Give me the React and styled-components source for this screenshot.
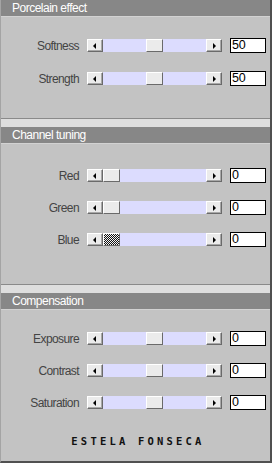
import React from "react";
import styled, { createGlobalStyle } from "styled-components";

const GlobalStyle = createGlobalStyle`
    html, body {
        margin: 0;
        padding: 0;
        background: #dedede;
    }
    * {
        box-sizing: border-box;
    }
`;

const uiFont = `"Liberation Sans", Arial, sans-serif`;

const StyledWindow = styled.div`
    width: 272px;
    height: 463px;
    display: flex;
    flex-direction: column;
    background: #dedede;
    border-left: 1px solid #a4a4a4;
    border-right: 2px solid #505050;
    border-bottom: 2px solid #505050;
    overflow: hidden;
    font-family: ${uiFont};
`;

const StyledPanel = styled.section`
    display: flex;
    flex-direction: column;
    background: #c3c3c3;
    border-bottom: ${({ $last }) => ($last ? "none" : "1px solid #8a8a8a")};
    margin-bottom: ${({ $last }) => ($last ? "0" : "8px")};
    flex: ${({ $last }) => ($last ? "1" : "none")};
`;

const StyledHeader = styled.h2`
    margin: 0;
    height: 17px;
    padding: 0 0 0 11px;
    background: #878787;
    border-bottom: 1px solid #d2d2d2;
    color: #fff;
    font-family: ${uiFont};
    font-size: 12px;
    letter-spacing: -0.5px;
    font-weight: normal;
    line-height: 16px;
`;

const StyledBody = styled.div`
    display: flex;
    flex-direction: column;
    gap: ${({ $gap }) => $gap}px;
    padding: ${({ $top }) => $top}px 0 ${({ $bottom }) => $bottom}px;
    flex: 1;
`;

const StyledRow = styled.div`
    display: flex;
    align-items: center;
    height: 15px;
`;

const StyledLabel = styled.span`
    width: 79px;
    padding-right: 1px;
    text-align: right;
    color: #444;
    font-size: 12px;
    letter-spacing: -0.6px;
    margin-right: 7px;
`;

const StyledSlider = styled.div`
    display: flex;
    width: 135px;
    height: 13px;
`;

const StyledArrowButton = styled.div`
    width: 16px;
    height: 13px;
    flex: none;
    display: flex;
    align-items: center;
    justify-content: center;
    background: #ebebeb;
    border-top: 1px solid #fff;
    border-left: 1px solid #fff;
    border-right: 1px solid #6a6a6a;
    border-bottom: 1px solid #6a6a6a;
    box-shadow: inset -1px -1px 0 #a8a8a8;
`;

const StyledArrow = styled.span`
    width: 0;
    height: 0;
    border-top: 3px solid transparent;
    border-bottom: 3px solid transparent;
    ${({ $dir }) =>
        $dir === "left"
            ? "border-right: 3px solid #000; margin-right: 1px;"
            : "border-left: 3px solid #000; margin-left: 1px;"}
`;

const StyledTrack = styled.div`
    position: relative;
    flex: 1;
    background: #dcdcfe;
`;

const StyledThumb = styled.div`
    position: absolute;
    top: 0;
    width: 17px;
    height: 13px;
    background: ${({ $dither }) =>
        $dither
            ? "repeating-conic-gradient(#111 0 25%, #f4f4f4 0 50%) 0 0 / 2px 2px"
            : "#ebebeb"};
    border-top: 1px solid #fff;
    border-left: 1px solid #fff;
    border-right: 1px solid #6a6a6a;
    border-bottom: 1px solid #6a6a6a;
`;

const StyledInput = styled.div`
    width: 36px;
    height: 15px;
    margin-left: 8px;
    padding-left: 1px;
    background: #fff;
    border: 1px solid #000;
    color: #000;
    font-size: 12.5px;
    letter-spacing: -0.3px;
    line-height: 13px;
`;

const StyledSignature = styled.div`
    margin-top: auto;
    margin-bottom: 14px;
    padding-left: 5px;
    text-align: center;
    font-family: "DejaVu Sans Mono", monospace;
    font-weight: bold;
    font-size: 10.5px;
    letter-spacing: 3.2px;
    color: #111;
`;

const panels = [
    {
        title: "Porcelain effect",
        top: 21,
        gap: 18,
        bottom: 32,
        rows: [
            { label: "Softness", value: 50, min: 0, max: 100 },
            { label: "Strength", value: 50, min: 0, max: 100 },
        ],
    },
    {
        title: "Channel tuning",
        top: 24,
        gap: 17,
        bottom: 37,
        rows: [
            { label: "Red", value: 0, min: 0, max: 100 },
            { label: "Green", value: 0, min: 0, max: 100 },
            { label: "Blue", value: 0, min: 0, max: 100, dither: true },
        ],
    },
    {
        title: "Compensation",
        top: 21,
        gap: 17,
        bottom: 0,
        rows: [
            { label: "Exposure", value: 0, min: -100, max: 100 },
            { label: "Contrast", value: 0, min: -100, max: 100 },
            { label: "Saturation", value: 0, min: -100, max: 100 },
        ],
    },
];

const TRACK_RANGE = 135 - 32 - 17;

const SliderRow = ({ label, value, min, max, dither }) => {
    const left = Math.round(((value - min) / (max - min)) * TRACK_RANGE);
    return (
        <StyledRow>
            <StyledLabel>{label}</StyledLabel>
            <StyledSlider>
                <StyledArrowButton>
                    <StyledArrow $dir="left" />
                </StyledArrowButton>
                <StyledTrack>
                    <StyledThumb $dither={dither} style={{ left }} />
                </StyledTrack>
                <StyledArrowButton>
                    <StyledArrow $dir="right" />
                </StyledArrowButton>
            </StyledSlider>
            <StyledInput>{value}</StyledInput>
        </StyledRow>
    );
};

const App = () => {
    return (
        <>
            <GlobalStyle />
            <StyledWindow>
                {panels.map((panel, i) => {
                    const last = i === panels.length - 1;
                    return (
                        <StyledPanel key={panel.title} $last={last}>
                            <StyledHeader>{panel.title}</StyledHeader>
                            <StyledBody $top={panel.top} $gap={panel.gap} $bottom={panel.bottom}>
                                {panel.rows.map((row) => (
                                    <SliderRow key={row.label} {...row} />
                                ))}
                                {last && <StyledSignature>ESTELA FONSECA</StyledSignature>}
                            </StyledBody>
                        </StyledPanel>
                    );
                })}
            </StyledWindow>
        </>
    );
};

export default App;
